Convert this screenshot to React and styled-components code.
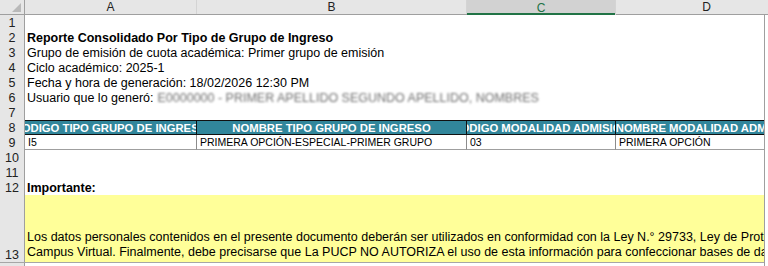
import React from 'react'
import styled, { createGlobalStyle } from 'styled-components'

const GlobalStyle = createGlobalStyle`
  html, body {
    margin: 0;
    padding: 0;
    background: #ffffff;
  }
  body {
    font-family: "Liberation Sans", Arial, sans-serif;
    overflow: hidden;
  }
`

// row header + columns A..D (D is wider than what the window shows)
const COLS = '25px 172px 270px 149px 182px'

const Window = styled.div`
  width: 768px;
  height: 266px;
  overflow: hidden;
  background: #ffffff;
`

const ColumnBar = styled.div`
  display: grid;
  grid-template-columns: ${COLS};
  height: 15px;
  box-sizing: border-box;
  background: #e6e6e6;
  border-bottom: 1px solid #9f9f9f;
`

const Corner = styled.div`
  display: flex;
  align-items: flex-end;
  justify-content: flex-end;
  padding: 0 3px 2px 0;
  border-right: 1px solid #9f9f9f;
`

const ColLetter = styled.div`
  display: flex;
  align-items: center;
  justify-content: center;
  font-size: 12px;
  color: ${props => (props.selected ? '#217346' : '#222222')};
  background: ${props => (props.selected ? '#d2d2d2' : 'transparent')};
  box-shadow: ${props => (props.selected ? 'inset 0 -2px 0 #217346' : 'none')};
  border-right: 1px solid #d4d4d4;
  margin-bottom: ${props => (props.selected ? '-1px' : '0')};
`

const Body = styled.div`
  width: 765px;
  box-sizing: border-box;
  border-right: 1px solid #9f9f9f;
  overflow: hidden;
`

const Row = styled.div`
  display: grid;
  grid-template-columns: ${COLS};
  height: ${props => props.h || 15}px;
  border-top: ${props => (props.split ? '1px solid #a6a6a6' : 'none')};
`

const RowNum = styled.div`
  display: flex;
  align-items: flex-end;
  justify-content: center;
  background: #e6e6e6;
  border-right: 1px solid #9f9f9f;
  font-size: 12.5px;
  line-height: 14px;
  color: #222222;
`

const TextCell = styled.div`
  grid-column: 2 / -1;
  display: flex;
  align-items: flex-end;
  padding-left: 2px;
  font-size: 12.5px;
  line-height: 14px;
  font-weight: ${props => (props.bold ? 700 : 400)};
  color: #000000;
  white-space: nowrap;
`

const Blurred = styled.span`
  color: #6f6f6f;
  filter: blur(1.1px);
  margin-left: 4px;
`

const HeadCell = styled.div`
  display: flex;
  align-items: center;
  justify-content: center;
  overflow: hidden;
  background: #31869b;
  color: #ffffff;
  font-size: 11.3px;
  font-weight: 700;
  white-space: nowrap;
  border-top: 1px solid #111111;
  border-bottom: 1px solid #111111;
  border-right: 1px solid #111111;
`

const DataCell = styled.div`
  display: flex;
  align-items: center;
  overflow: hidden;
  padding-left: 3px;
  font-size: 10.5px;
  color: #000000;
  white-space: nowrap;
  border-right: 1px solid #8c8c8c;
  border-bottom: 1px solid #9f9f9f;
`

const NoteCell = styled.div`
  grid-column: 2 / -1;
  display: flex;
  flex-direction: column;
  justify-content: flex-end;
  padding: 0 0 2px 2px;
  background: #ffff99;
  font-size: 12.5px;
  line-height: 15px;
  color: #000000;
`

const NoteLine = styled.div`
  white-space: nowrap;
`

const headers = [
  'CODIGO TIPO GRUPO DE INGRESO',
  'NOMBRE TIPO GRUPO DE INGRESO',
  'CODIGO MODALIDAD ADMISION',
  'NOMBRE MODALIDAD ADMISION'
]

const record = ['I5', 'PRIMERA OPCIÓN-ESPECIAL-PRIMER GRUPO', '03', 'PRIMERA OPCIÓN']

const info = [
  { n: 1, text: '' },
  { n: 2, text: 'Reporte Consolidado Por Tipo de Grupo de Ingreso', bold: true },
  { n: 3, text: 'Grupo de emisión de cuota académica: Primer grupo de emisión' },
  { n: 4, text: 'Ciclo académico: 2025-1' },
  { n: 5, text: 'Fecha y hora de generación: 18/02/2026 12:30 PM' }
]

const CornerMark = () => (
  <svg width='9' height='9' viewBox='0 0 9 9'>
    <polygon points='9,0 9,9 0,9' fill='#b9b9b9' />
  </svg>
)

export default function App () {
  return (
    <Window>
      <GlobalStyle />
      <ColumnBar>
        <Corner><CornerMark /></Corner>
        <ColLetter>A</ColLetter>
        <ColLetter>B</ColLetter>
        <ColLetter selected>C</ColLetter>
        <ColLetter>D</ColLetter>
      </ColumnBar>

      <Body>
        {info.map(row => (
          <Row key={row.n}>
            <RowNum>{row.n}</RowNum>
            <TextCell bold={row.bold}>{row.text}</TextCell>
          </Row>
        ))}
        <Row>
          <RowNum>6</RowNum>
          <TextCell>
            Usuario que lo generó:
            <Blurred>E0000000 - PRIMER APELLIDO SEGUNDO APELLIDO, NOMBRES</Blurred>
          </TextCell>
        </Row>
        <Row>
          <RowNum>7</RowNum>
          <TextCell />
        </Row>
        <Row>
          <RowNum>8</RowNum>
          {headers.map(h => (
            <HeadCell key={h}><span>{h}</span></HeadCell>
          ))}
        </Row>
        <Row>
          <RowNum>9</RowNum>
          {record.map((v, i) => (
            <DataCell key={i}>{v}</DataCell>
          ))}
        </Row>
        <Row>
          <RowNum>10</RowNum>
          <TextCell />
        </Row>
        <Row>
          <RowNum>11</RowNum>
          <TextCell />
        </Row>
        <Row>
          <RowNum>12</RowNum>
          <TextCell bold>Importante:</TextCell>
        </Row>
        <Row h={67}>
          <RowNum>13</RowNum>
          <NoteCell>
            <NoteLine>
              Los datos personales contenidos en el presente documento deberán ser utilizados en conformidad con la Ley N.° 29733, Ley de Protección de Datos Personales, y su Reglamento.
            </NoteLine>
            <NoteLine>
              Campus Virtual. Finalmente, debe precisarse que La PUCP NO AUTORIZA el uso de esta información para confeccionar bases de datos personales.
            </NoteLine>
          </NoteCell>
        </Row>
        <Row split>
          <RowNum>14</RowNum>
          <TextCell />
        </Row>
      </Body>
    </Window>
  )
}
